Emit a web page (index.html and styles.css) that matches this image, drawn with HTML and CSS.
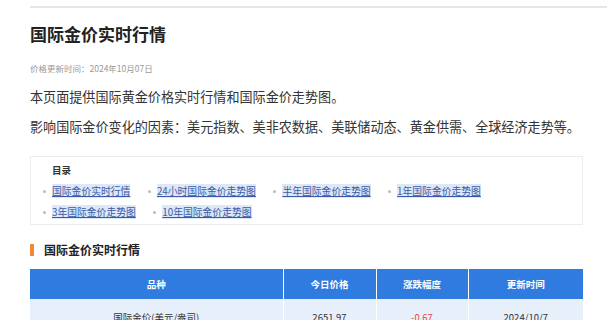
FILE: index.html
```html
<!DOCTYPE html>
<html lang="zh-CN">
<head>
  <meta charset="UTF-8">
  <meta name="viewport" content="width=device-width, initial-scale=1.0">
  <title>国际金价实时行情</title>
  <link rel="stylesheet" href="styles.css">
</head>
<body>
  <div class="top-rule"></div>
  <div class="container">
    <h1>国际金价实时行情</h1>
    <div class="update-time">价格更新时间：2024年10月07日</div>

    <p class="intro">本页面提供国际黄金价格实时行情和国际金价走势图。</p>
    <p class="intro">影响国际金价变化的因素：美元指数、美非农数据、美联储动态、黄金供需、全球经济走势等。</p>

    <div class="toc">
      <div class="toc-title">目录</div>
      <ul class="toc-row">
        <li><a href="#">国际金价实时行情</a></li>
        <li><a href="#">24小时国际金价走势图</a></li>
        <li><a href="#">半年国际金价走势图</a></li>
        <li><a href="#">1年国际金价走势图</a></li>
      </ul>
      <ul class="toc-row">
        <li><a href="#">3年国际金价走势图</a></li>
        <li><a href="#">10年国际金价走势图</a></li>
      </ul>
    </div>

    <h2 class="section-title">国际金价实时行情</h2>
    <table class="price-table">
      <thead>
        <tr>
          <th class="col-name">品种</th>
          <th class="col-price">今日价格</th>
          <th class="col-change">涨跌幅度</th>
          <th class="col-time">更新时间</th>
        </tr>
      </thead>
      <tbody>
        <tr>
          <td>国际金价(美元/盎司)</td>
          <td>2651.97</td>
          <td class="down">-0.67</td>
          <td>2024/10/7</td>
        </tr>
      </tbody>
    </table>
  </div>
</body>
</html>
```

FILE: styles.css
```css
* {
  box-sizing: border-box;
}
body {
  margin: 0;
  font-family: "Noto Sans CJK SC", "Noto Sans", sans-serif;
  background-color: #fff;
  color: #333;
}
.top-rule {
  height: 2px;
  margin: 6px 0 0 30px;
  background-color: #e6e6e6;
}
.container {
  width: 553px;
  margin-left: 30px;
}
h1 {
  margin: 14px 0 0;
  font-size: 17px;
  line-height: 24px;
  font-weight: bold;
  color: #222;
}
.update-time {
  margin-top: 16px;
  font-size: 8.5px;
  line-height: 12px;
  color: #999;
}
.intro {
  margin: 0;
  font-size: 13.1px;
  line-height: 18px;
  color: #333;
  white-space: nowrap;
}
.update-time + .intro {
  margin-top: 14px;
}
.intro + .intro {
  margin-top: 12px;
}
.toc {
  margin-top: 20px;
  border: 1px solid #ececec;
  padding: 6px 12px 6px 12px;
  height: 69px;
}
.toc-title {
  padding-left: 9px;
  font-size: 9.5px;
  line-height: 14px;
  font-weight: bold;
  color: #333;
}
.toc-row {
  list-style: none;
  margin: 7px 0 0;
  padding: 0;
  display: flex;
  gap: 17.5px;
  font-size: 9.8px;
  line-height: 14px;
}
.toc-row li {
  display: flex;
  align-items: center;
  gap: 6px;
}
.toc-row li::before {
  content: "";
  width: 3px;
  height: 3px;
  border-radius: 50%;
  background-color: #bbb;
}
.toc-row a {
  color: #3a5aa6;
  text-decoration: underline;
  background-color: #dce7f7;
}
.section-title {
  margin: 17px 0 0;
  display: flex;
  align-items: center;
  gap: 10px;
  font-size: 12px;
  line-height: 16px;
  font-weight: bold;
  color: #222;
}
.section-title::before {
  content: "";
  width: 4px;
  height: 12px;
  background-color: #f08a3a;
}
.price-table {
  margin-top: 11px;
  width: 553px;
  border-collapse: collapse;
  font-size: 9.5px;
}
.price-table th {
  height: 30px;
  background-color: #2f7be0;
  color: #fff;
  font-weight: bold;
  border-left: 1px solid #fff;
}
.price-table th:first-child,
.price-table td:first-child {
  border-left: none;
}
.col-name { width: 253px; }
.col-price { width: 93px; }
.col-change { width: 92px; }
.col-time { width: 115px; }
.price-table td {
  height: 36px;
  text-align: center;
  background-color: #e7effb;
  color: #333;
  border-left: 1px solid #fff;
}
.price-table td.down {
  color: #e04848;
}
```
